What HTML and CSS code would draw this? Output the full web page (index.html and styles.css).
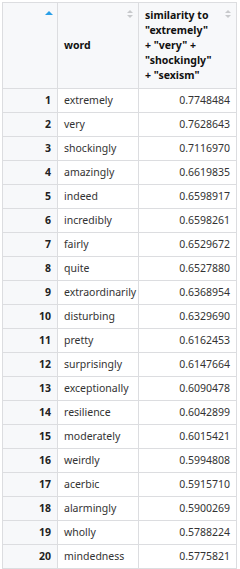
FILE: index.html
```html
<!DOCTYPE html>
<html>
<head>
<meta charset="utf-8">
<link rel="stylesheet" href="styles.css">
</head>
<body>
<table class="grid">
  <colgroup><col class="c-idx"><col class="c-word"><col class="c-sim"></colgroup>
  <thead>
    <tr>
      <th class="h-idx"><span class="sort-asc"></span></th>
      <th class="h-word">word<span class="sort-none"><i class="up"></i><i class="down"></i></span></th>
      <th class="h-sim">similarity to "extremely" + "very" + "shockingly" + "sexism"<span class="sort-none"><i class="up"></i><i class="down"></i></span></th>
    </tr>
  </thead>
  <tbody>
    <tr><td class="idx">1</td><td>extremely</td><td class="num">0.7748484</td></tr>
    <tr><td class="idx">2</td><td>very</td><td class="num">0.7628643</td></tr>
    <tr><td class="idx">3</td><td>shockingly</td><td class="num">0.7116970</td></tr>
    <tr><td class="idx">4</td><td>amazingly</td><td class="num">0.6619835</td></tr>
    <tr><td class="idx">5</td><td>indeed</td><td class="num">0.6598917</td></tr>
    <tr><td class="idx">6</td><td>incredibly</td><td class="num">0.6598261</td></tr>
    <tr><td class="idx">7</td><td>fairly</td><td class="num">0.6529672</td></tr>
    <tr><td class="idx">8</td><td>quite</td><td class="num">0.6527880</td></tr>
    <tr><td class="idx">9</td><td>extraordinarily</td><td class="num">0.6368954</td></tr>
    <tr><td class="idx">10</td><td>disturbing</td><td class="num">0.6329690</td></tr>
    <tr><td class="idx">11</td><td>pretty</td><td class="num">0.6162453</td></tr>
    <tr><td class="idx">12</td><td>surprisingly</td><td class="num">0.6147664</td></tr>
    <tr><td class="idx">13</td><td>exceptionally</td><td class="num">0.6090478</td></tr>
    <tr><td class="idx">14</td><td>resilience</td><td class="num">0.6042899</td></tr>
    <tr><td class="idx">15</td><td>moderately</td><td class="num">0.6015421</td></tr>
    <tr><td class="idx">16</td><td>weirdly</td><td class="num">0.5994808</td></tr>
    <tr><td class="idx">17</td><td>acerbic</td><td class="num">0.5915710</td></tr>
    <tr><td class="idx">18</td><td>alarmingly</td><td class="num">0.5900269</td></tr>
    <tr><td class="idx">19</td><td>wholly</td><td class="num">0.5788224</td></tr>
    <tr><td class="idx">20</td><td>mindedness</td><td class="num">0.5775821</td></tr>
  </tbody>
</table>
</body>
</html>
```
FILE: styles.css
```css
html, body {
  margin: 0;
  padding: 0;
  background: #ffffff;
}
body {
  padding: 2px 0 0 2px;
  font-family: "Noto Sans", "Open Sans", sans-serif;
  font-size: 10.5px;
  color: #333;
}
.grid {
  border-collapse: collapse;
  table-layout: fixed;
  width: 234px;
}
.c-idx { width: 55px; }
.c-word { width: 81px; }
.c-sim { width: 98px; }
.grid th, .grid td {
  border: 1px solid #dcdde0;
  padding: 0 6px;
  overflow: hidden;
  white-space: nowrap;
}
.grid th {
  position: relative;
  height: 85px;
  background: #f7f8fa;
  text-align: left;
  vertical-align: middle;
  font-weight: bold;
  color: #111;
  line-height: 15px;
  white-space: normal;
  padding-right: 14px;
}
.grid th.h-sim {
  padding-right: 22px;
}
.grid td {
  height: 23px;
  line-height: 23px;
}
.grid td.idx {
  background: #f7f8fa;
  text-align: right;
  font-weight: bold;
  color: #222;
}
.grid td.num {
  text-align: right;
}
.sort-asc {
  position: absolute;
  right: 4px;
  top: 8px;
  width: 0;
  height: 0;
  border-left: 4px solid transparent;
  border-right: 4px solid transparent;
  border-bottom: 4px solid #2a9fe8;
}
.sort-none {
  position: absolute;
  right: 5px;
  top: 7px;
  display: flex;
  flex-direction: column;
  gap: 2px;
}
.sort-none i {
  display: block;
  width: 0;
  height: 0;
  border-left: 3px solid transparent;
  border-right: 3px solid transparent;
}
.sort-none .up { border-bottom: 3px solid #c8c9cc; }
.sort-none .down { border-top: 3px solid #c8c9cc; }
```
